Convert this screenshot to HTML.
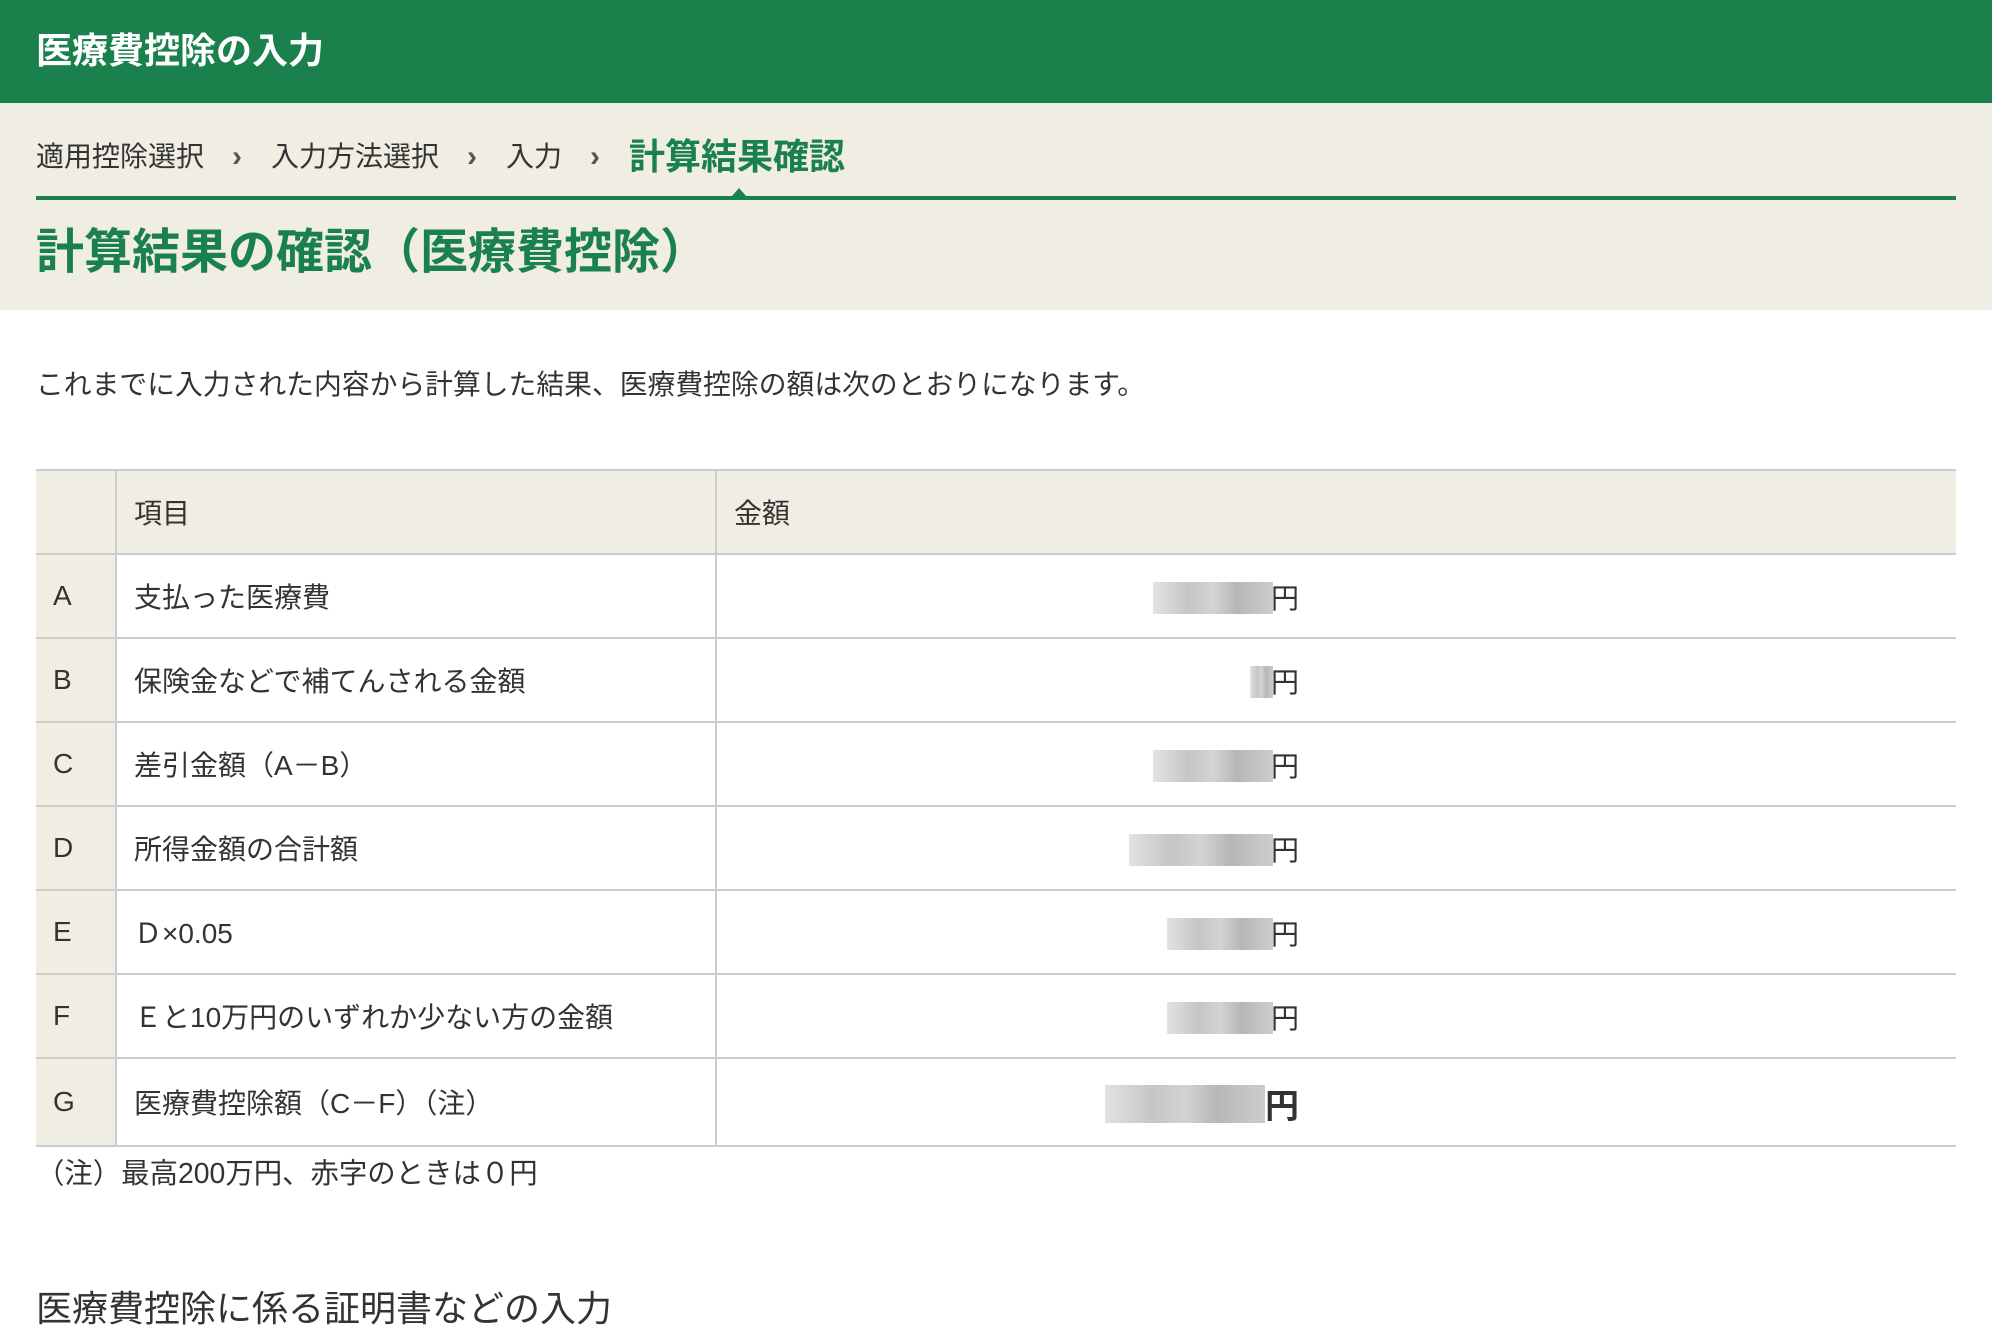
<!DOCTYPE html>
<html><head><meta charset="utf-8"><style>
*{margin:0;padding:0;box-sizing:border-box}
body{width:1992px;height:1309px;overflow:hidden;background:#fff;font-family:"Liberation Sans","Noto Sans CJK JP",sans-serif;color:#333;position:relative}
.hd{position:absolute;left:0;top:0;width:1992px;height:103px;background:#1a804c;color:#fff;font-weight:bold;font-size:36px;line-height:101px;padding-left:36px}
.bg{position:absolute;left:0;top:103px;width:1992px;height:207px;background:#f0ede3}
.bc{position:absolute;top:132px;left:36px;font-size:28px;line-height:46px;white-space:nowrap;color:#333}
.bc span{display:inline-block;vertical-align:middle}
.bc .sep{color:#555;margin:0 29px 0 28px;font-size:30px;font-weight:bold}
.bc .cur{color:#1a804c;font-weight:bold;font-size:36px}
.line{position:absolute;left:36px;top:196px;width:1920px;height:4px;background:#1a804c}
.tri{position:absolute;left:732px;top:188px;width:0;height:0;border-left:7px solid transparent;border-right:7px solid transparent;border-bottom:8px solid #1a804c}
.ttl{position:absolute;left:36px;top:222px;font-size:48px;font-weight:bold;color:#1a804c;line-height:62px;white-space:nowrap}
.intro{position:absolute;left:36px;top:368px;font-size:27.8px;line-height:34px;white-space:nowrap}
table{position:absolute;left:36px;top:469px;width:1920px;border-collapse:collapse;font-size:28px}
td{border-top:2px solid #ccc;border-bottom:2px solid #ccc;height:84px;padding:0 17px;white-space:nowrap}
td.k{background:#f0ede3;width:80px;border-right:2px solid #ccc}
td.n{width:600px;border-right:2px solid #ccc}
tr.h td{background:#f0ede3}
td.v{position:relative}
.b{position:absolute;top:27px;height:32px;background:linear-gradient(90deg,#ddd,#bbb 30%,#ccc 50%,#aaa 70%,#c4c4c4);opacity:.85}
.y{position:absolute;left:554px;top:22px;font-size:28px}
.note{position:absolute;left:36px;top:1155px;font-size:28.4px;line-height:38px;white-space:nowrap}
.h2{position:absolute;left:36px;top:1284px;font-size:36px;line-height:50px;white-space:nowrap}
</style></head><body>
<div class="hd">医療費控除の入力</div>
<div class="bg"></div>
<div class="bc"><span>適用控除選択</span><span class="sep">›</span><span>入力方法選択</span><span class="sep">›</span><span>入力</span><span class="sep">›</span><span class="cur">計算結果確認</span></div>
<div class="tri"></div>
<div class="line"></div>
<div class="ttl">計算結果の確認（医療費控除）</div>
<div class="intro">これまでに入力された内容から計算した結果、医療費控除の額は次のとおりになります。</div>
<table>
<tr class="h"><td class="k"></td><td class="n">項目</td><td>金額</td></tr>
<tr><td class="k">A</td><td class="n">支払った医療費</td><td class="v"><div class="b" style="left:436px;width:120px"></div><span class="y">円</span></td></tr>
<tr><td class="k">B</td><td class="n">保険金などで補てんされる金額</td><td class="v"><div class="b" style="left:533px;width:23px"></div><span class="y">円</span></td></tr>
<tr><td class="k">C</td><td class="n">差引金額（A－B）</td><td class="v"><div class="b" style="left:436px;width:120px"></div><span class="y">円</span></td></tr>
<tr><td class="k">D</td><td class="n">所得金額の合計額</td><td class="v"><div class="b" style="left:412px;width:144px"></div><span class="y">円</span></td></tr>
<tr><td class="k">E</td><td class="n">Ｄ×0.05</td><td class="v"><div class="b" style="left:450px;width:106px"></div><span class="y">円</span></td></tr>
<tr><td class="k">F</td><td class="n">Ｅと10万円のいずれか少ない方の金額</td><td class="v"><div class="b" style="left:450px;width:106px"></div><span class="y">円</span></td></tr>
<tr><td class="k" style="height:88px">G</td><td class="n">医療費控除額（C－F）（注）</td><td class="v"><div class="b" style="left:388px;width:160px;top:26px;height:38px"></div><span class="y" style="left:548px;font-size:34px;font-weight:bold;top:20px">円</span></td></tr>
</table>
<div class="note">（注）最高200万円、赤字のときは０円</div>
<div class="h2">医療費控除に係る証明書などの入力</div>
</body></html>
